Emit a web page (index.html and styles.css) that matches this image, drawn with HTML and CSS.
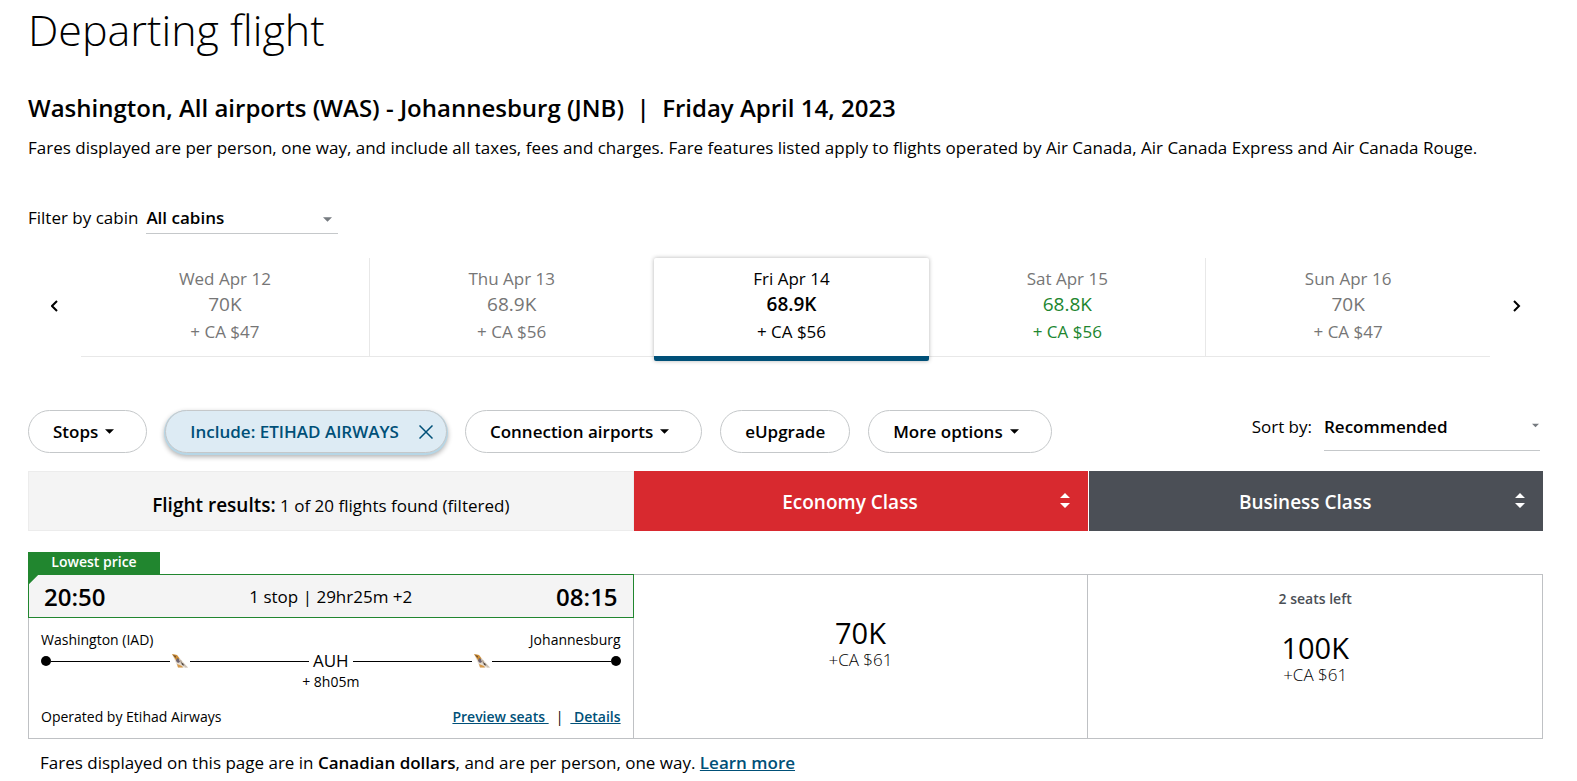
FILE: index.html
```html
<!DOCTYPE html>
<html lang="en">
<head>
<meta charset="utf-8">
<meta name="viewport" content="width=device-width, initial-scale=1">
<title>Departing flight</title>
<link rel="stylesheet" href="styles.css">
</head>
<body>
<svg class="defs" aria-hidden="true">
  <symbol id="caret" viewBox="0 0 10 5"><path d="M0 0h10L5 5z"/></symbol>
  <symbol id="sort" viewBox="0 0 10 16"><path d="M5 0l5 5H0zM0 10h10l-5 5z"/></symbol>
  <symbol id="tail" viewBox="0 0 16 14">
    <path fill="#e6ddd2" d="M0 0l5 1 11 12.500H6z"/>
    <path fill="#cf8f35" d="M0 0l5 1 2.500 3.500L4.500 7z"/>
    <path fill="#6b4a2c" d="M1 1l3 1-.5 2z"/>
    <path fill="#6d6470" d="M5 4l2 1 1 3-2 1-2-2z"/>
    <path fill="#b9a999" d="M7 5l3 2-1 3z"/>
    <path fill="#54483f" d="M9 8l3 2 1 2-3-1z"/>
    <path fill="#d79a4a" d="M5 10l5 2 1 1.500H6z"/>
    <path fill="#c9bfb4" d="M11 9l5 4.500h-3z"/>
  </symbol>
</svg>
<main class="page">
  <h1 class="title">Departing flight</h1>
  <h2 class="route">Washington, All airports (WAS) - Johannesburg (JNB) &nbsp;|&nbsp; Friday April 14, 2023</h2>
  <p class="intro">Fares displayed are per person, one way, and include all taxes, fees and charges. Fare features listed apply to flights operated by Air Canada, Air Canada Express and Air Canada Rouge.</p>

  <div class="cabin">
    <label for="cabin">Filter by cabin</label>
    <span class="select cabin-select">
      <select id="cabin"><option>All cabins</option></select>
      <svg class="select-caret"><use href="#caret"/></svg>
    </span>
  </div>

  <div class="calendar">
    <button class="nav" aria-label="Previous dates"><svg viewBox="0 0 8 12"><path d="M6 1L1 6l5 5"/></svg></button>
    <div class="days">
      <button class="day"><span>Wed Apr 12</span><span class="points">70K</span><span class="tax">+ CA $47</span></button>
      <button class="day"><span>Thu Apr 13</span><span class="points">68.9K</span><span class="tax">+ CA $56</span></button>
      <button class="day selected"><span>Fri Apr 14</span><span class="points">68.9K</span><span class="tax">+ CA $56</span></button>
      <button class="day lowest"><span class="date">Sat Apr 15</span><span class="points">68.8K</span><span class="tax">+ CA $56</span></button>
      <button class="day"><span>Sun Apr 16</span><span class="points">70K</span><span class="tax">+ CA $47</span></button>
    </div>
    <button class="nav" aria-label="Next dates"><svg viewBox="0 0 8 12"><path d="M1 1l5 5-5 5"/></svg></button>
  </div>

  <div class="toolbar">
    <div class="filters">
      <button class="pill menu">Stops <svg class="caret"><use href="#caret"/></svg></button>
      <button class="pill active">Include: ETIHAD AIRWAYS <svg class="close" viewBox="0 0 14 14"><path d="M0.500 0.500l13 13M13.500 0.500l-13 13"/></svg></button>
      <button class="pill menu">Connection airports <svg class="caret"><use href="#caret"/></svg></button>
      <button class="pill">eUpgrade</button>
      <button class="pill menu">More options <svg class="caret"><use href="#caret"/></svg></button>
    </div>
    <div class="sort">
      <label for="sort-by">Sort by:</label>
      <span class="select sort-select">
        <select id="sort-by"><option>Recommended</option></select>
        <svg class="select-caret"><use href="#caret"/></svg>
      </span>
    </div>
  </div>

  <div class="results-head">
    <p class="count"><strong>Flight results:</strong> 1 of 20 flights found (filtered)</p>
    <button class="cabin-head economy"><span>Economy Class</span><svg class="sort-icon"><use href="#sort"/></svg></button>
    <button class="cabin-head business"><span>Business Class</span><svg class="sort-icon"><use href="#sort"/></svg></button>
  </div>

  <div class="badge">Lowest price</div>
  <article class="flight">
    <section class="info">
      <div class="times">
        <span class="time">20:50</span>
        <span>1 stop | 29hr25m +2</span>
        <span class="time">08:15</span>
      </div>
      <div class="details">
        <div class="ends"><span>Washington (IAD)</span><span>Johannesburg</span></div>
        <div class="track">
          <i class="dot"></i><i class="line"></i><svg class="tail"><use href="#tail"/></svg><i class="line"></i>
          <span class="via">AUH</span>
          <i class="line"></i><svg class="tail"><use href="#tail"/></svg><i class="line"></i><i class="dot"></i>
        </div>
        <div class="layover">+ 8h05m</div>
        <div class="operator">
          <span>Operated by Etihad Airways</span>
          <span class="links"><a href="#seats">Preview seats&nbsp;</a><span>|</span><a href="#details">&nbsp;Details</a></span>
        </div>
      </div>
    </section>
    <button class="fare"><span class="fare-points">70K</span><span class="fare-tax">+CA $61</span></button>
    <button class="fare limited"><span class="seats">2 seats left</span><span class="fare-points">100K</span><span class="fare-tax">+CA $61</span></button>
  </article>

  <p class="note">Fares displayed on this page are in <strong>Canadian dollars</strong>, and are per person, one way. <a href="#learn">Learn more</a></p>
</main>
</body>
</html>
```

FILE: styles.css
```css
* { box-sizing: border-box; }

body {
  margin: 0;
  background: #fff;
  color: #000;
  font: 400 17px/24px "Open Sans", "Noto Sans", sans-serif;
}

h1, h2, p { margin: 0; }
strong { font-weight: 600; }
a { color: #005078; font-weight: 600; }
button, select { font: inherit; color: inherit; border: 0; background: none; padding: 0; }
button { cursor: pointer; }
.defs { display: none; }

.page { padding: 0 34px 0 28px; }
.title { font-size: 43px; line-height: 60px; font-weight: 300; }
.route { margin-top: 32px; font-size: 24px; line-height: 32px; font-weight: 600; }
.intro { margin-top: 12px; }

/* drop-downs */
.select { position: relative; display: block; border-bottom: 1px solid #c5c8ca; }
.select select { width: 100%; appearance: none; font-weight: 600; outline: none; }
.select-caret { position: absolute; width: 9px; height: 5px; fill: #767b80; pointer-events: none; }
.cabin { display: flex; align-items: flex-start; gap: 8px; margin-top: 46px; }
.cabin-select { width: 192px; padding-bottom: 3px; }
.cabin-select .select-caret { right: 6px; top: 11px; }

/* date carousel */
.calendar { display: flex; align-items: flex-start; margin-top: 24px; }
.nav { flex: 0 0 53px; height: 96px; display: flex; align-items: center; justify-content: center; }
.nav svg { width: 8px; height: 12px; fill: none; stroke: #000; stroke-width: 2; }
.days { flex: 1; display: grid; grid-template-columns: 289fr 284fr 276fr 277fr 284fr; border-bottom: 1px solid #e8e8e8; }
.day { height: 98px; display: flex; flex-direction: column; align-items: center; padding-top: 8px; color: #767676; border-right: 1px solid #e8e8e8; }
.day span { line-height: 26px; }
.day .points { font-size: 19px; line-height: 25px; }
.day .tax { line-height: 30px; }
.day:nth-child(2), .day:last-child { border-right: 0; }
.day.lowest { color: #21862f; }
.day.lowest .date { color: #767676; }
.day.selected { position: relative; height: 103px; margin-bottom: -5px; color: #000; background: #fff; border: 0; border-bottom: 5px solid #005078; border-radius: 2px; box-shadow: 0 0 4px rgba(0, 0, 0, .3); }
.day.selected .points { font-weight: 600; }

/* filters */
.toolbar { display: flex; justify-content: space-between; align-items: flex-start; margin-top: 53px; }
.filters { display: flex; gap: 18px; }
.pill { height: 43px; padding: 0 24px; display: flex; align-items: center; border: 1px solid #c5c8ca; border-radius: 22px; font-weight: 600; }
.pill.menu { padding-right: 32px; }
.pill .caret { width: 9px; height: 5px; margin-left: 7px; }
.pill.active { color: #005078; background: #ddebf4; padding: 0 13px 0 24px; box-shadow: 0 1px 0 1px #b6d6e6, 0 3px 5px 1px rgba(0, 0, 0, .3); }
.pill .close { width: 14px; height: 14px; margin-left: 20px; fill: none; stroke: #005078; stroke-width: 1.5; }
.sort { display: flex; gap: 12px; padding-top: 5px; margin-right: 3px; }
.sort-select { width: 216px; padding-bottom: 11px; }
.sort-select .select-caret { right: 1px; top: 8px; width: 7px; }

/* results */
.results-head, .flight { display: grid; grid-template-columns: 606fr 455fr 455fr; }
.results-head { margin-top: 18px; height: 60px; }
.count { background: #f4f4f4; border: 1px solid #ececec; text-align: center; padding-top: 21px; }
.count strong { font-size: 19px; }
.cabin-head { position: relative; padding: 2px 22px 0 0; color: #fff; font-size: 19px; font-weight: 600; }
.economy { background: #d8292f; }
.business { background: #4b4f56; border-left: 1px solid #fff; }
.sort-icon { position: absolute; right: 18px; top: 22px; width: 10px; height: 16px; fill: #fff; }

.badge { position: relative; width: 132px; margin-top: 21px; padding-bottom: 2px; background: #21862f; color: #fff; font-size: 14px; line-height: 20px; text-align: center; font-weight: 600; }
.flight { min-height: 165px; }
.info { display: flex; flex-direction: column; border: 1px solid #bfc1c4; border-top: 0; }
.times { position: relative; display: flex; align-items: center; justify-content: space-between; height: 44px; margin: 0 -1px; padding: 2px 15px 0; border: 1px solid #21862f; background: linear-gradient(135deg, #21862f 6px, #f4f4f4 7px); }
.time { font-size: 24px; font-weight: 600; }
.details { flex: 1; padding: 12px 12px 11px; font-size: 14px; line-height: 20px; }
.ends, .operator { display: flex; justify-content: space-between; }
.track { display: flex; align-items: center; height: 22px; font-size: 17px; }
.dot { width: 10px; height: 10px; border-radius: 50%; background: #000; }
.line { flex: 1; height: 1px; background: #000; }
.tail { width: 16px; height: 14px; margin: 0 2px; }
.via { padding: 0 4px; }
.layover { text-align: center; }
.operator { margin-top: 15px; }
.links { display: flex; gap: 7px; }
.fare { display: flex; flex-direction: column; align-items: center; justify-content: center; padding-bottom: 24px; border: 1px solid #bfc1c4; border-left: 0; }
.fare-points { font-size: 29px; line-height: 30px; }
.fare-tax { font-weight: 300; }
.fare.limited { justify-content: flex-start; padding-top: 14px; }
.seats { font-size: 14px; line-height: 20px; font-weight: 600; color: #4b4f56; margin-bottom: 24px; }
.note { padding: 12px; }
```
